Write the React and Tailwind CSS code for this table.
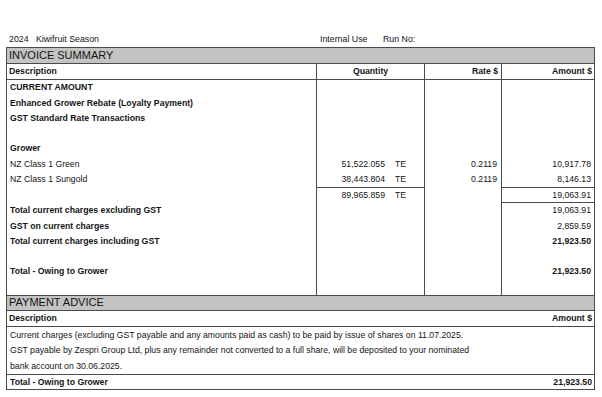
const rows = [
  { d: "CURRENT AMOUNT", bold: true },
  { d: "Enhanced Grower Rebate (Loyalty Payment)", bold: true },
  { d: "GST Standard Rate Transactions", bold: true },
  { d: "" },
  { d: "Grower", bold: true },
  { d: "NZ Class 1 Green", q: "51,522.055", r: "0.2119", a: "10,917.78" },
  { d: "NZ Class 1 Sungold", q: "38,443.804", r: "0.2119", a: "8,146.13" },
  { d: "", q: "89,965.859", a: "19,063.91", qLine: true, aLine: true },
  { d: "Total current charges excluding GST", bold: true, a: "19,063.91", aLine: true },
  { d: "GST on current charges", bold: true, a: "2,859.59" },
  { d: "Total current charges including GST", bold: true, a: "21,923.50", aBold: true },
  { d: "" },
  { d: "Total - Owing to Grower", bold: true, a: "21,923.50", aBold: true },
  { d: "" },
];

function App() {
  return (
    <div className="w-[602px] h-[397px] bg-white text-[#141414] font-['Liberation_Sans',Arial,sans-serif] overflow-hidden">
      <div className="flex items-center h-[10px] mt-[34px] text-[8.8px] leading-none">
        <span className="ml-[9px] w-[311px]">2024&nbsp;&nbsp;&nbsp;Kiwifruit Season</span>
        <span className="w-[63px]">Internal Use</span>
        <span>Run No:</span>
      </div>

      <div className="ml-[6px] mt-[3px] w-[589px] border border-[#4a4a4a]">
        <div className="h-[16px] bg-[#c3c3c3] border-b border-[#4a4a4a] flex items-center pl-[2px] text-[11px] leading-none">
          INVOICE SUMMARY
        </div>
        <div className="grid grid-cols-[310px_108px_77px_1fr] h-[16px] border-b border-[#4a4a4a] text-[8.7px] font-bold leading-none">
          <div className="flex items-center pl-[2px] border-r border-[#4a4a4a]">Description</div>
          <div className="flex items-center justify-center border-r border-[#4a4a4a]">Quantity</div>
          <div className="flex items-center justify-end pr-[3px] border-r border-[#4a4a4a]">Rate $</div>
          <div className="flex items-center justify-end pr-[2px]">Amount $</div>
        </div>
        <div className="grid grid-cols-[310px_108px_77px_1fr] text-[8.7px] leading-none">
          {rows.map((row, i) => (
            <div key={i} className="contents">
              <div className={`h-[15.25px] flex items-center pl-[3px] border-r border-[#4a4a4a] ${row.bold ? "font-bold" : ""} ${row.aLine && !row.qLine ? "h-[16.25px]" : ""}`}>
                {row.d}
              </div>
              <div className={`flex items-center border-r border-[#4a4a4a] ${row.qLine ? "border-t" : ""}`}>
                {row.q && (
                  <>
                    <span className="w-[68px] text-right">{row.q}</span>
                    <span className="ml-[10px]">TE</span>
                  </>
                )}
              </div>
              <div className="flex items-center justify-end pr-[4px] border-r border-[#4a4a4a]">{row.r}</div>
              <div className={`flex items-center justify-end pr-[3px] border-[#4a4a4a] ${row.aLine ? "border-t" : ""} ${row.aBold ? "font-bold" : ""}`}>
                {row.a}
              </div>
            </div>
          ))}
        </div>

        <div className="h-[16px] bg-[#c3c3c3] border-y border-[#4a4a4a] flex items-center pl-[2px] text-[11px] leading-none">
          PAYMENT ADVICE
        </div>
        <div className="h-[16px] border-b border-[#4a4a4a] flex items-center justify-between px-[2px] text-[8.7px] font-bold leading-none">
          <span>Description</span>
          <span>Amount $</span>
        </div>
        <div className="flex flex-col text-[8.7px] leading-none pl-[3px] pt-[1px] border-b border-[#4a4a4a]">
          <div className="h-[15.5px] flex items-center">
            Current charges (excluding GST payable and any amounts paid as cash) to be paid by issue of shares on 11.07.2025.
          </div>
          <div className="h-[15.5px] flex items-center">
            GST payable by Zespri Group Ltd, plus any remainder not converted to a full share, will be deposited to your nominated
          </div>
          <div className="h-[15.5px] flex items-center">bank account on 30.06.2025.</div>
        </div>
        <div className="h-[14px] flex items-center justify-between pl-[3px] pr-[2px] text-[8.7px] font-bold leading-none">
          <span>Total - Owing to Grower</span>
          <span>21,923.50</span>
        </div>
      </div>
    </div>
  );
}

export default App;
